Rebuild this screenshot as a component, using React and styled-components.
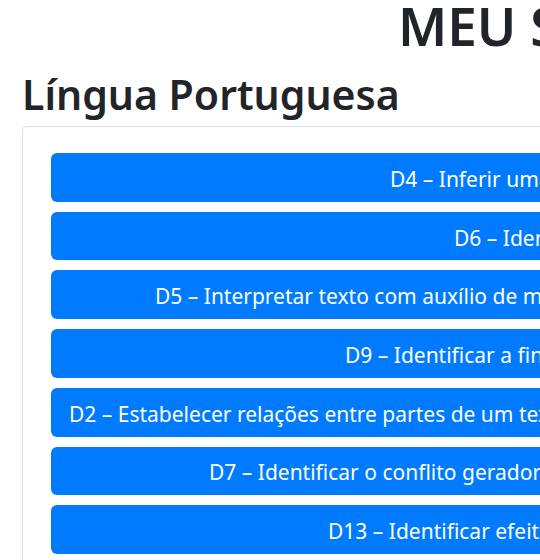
import React from "react";
import styled, { createGlobalStyle } from "styled-components";

const GlobalStyle = createGlobalStyle`
  *, *::before, *::after { box-sizing: border-box; }
  body {
    margin: 0;
    background: #fff;
    color: #212529;
    font-family: "Noto Sans", "Open Sans", sans-serif;
    overflow: hidden;
  }
`;

const Page = styled.main`
  padding-left: 22px;
  overflow: hidden;
`;

const Title = styled.h1`
  margin: 0;
  padding-left: 376px;
  font-size: 53px;
  line-height: 52px;
  font-weight: 600;
  white-space: nowrap;
`;

const SectionTitle = styled.h2`
  margin: 18px 0 8px;
  font-size: 41px;
  line-height: 48px;
  font-weight: 600;
  white-space: nowrap;
`;

const Card = styled.section`
  padding: 26px 0 26px 28px;
  border: 1px solid #dfdfdf;
  border-right: 0;
  border-top-left-radius: 5px;
`;

const SkillList = styled.div`
  display: grid;
  grid-auto-rows: 1fr;
  gap: 10px;
  min-height: 401px;
`;

const SkillButton = styled.button`
  min-width: 0;
  padding: 3px 0 0 ${({ $indent }) => $indent}px;
  border: 0;
  border-radius: 6px 0 0 6px;
  background: #007bff;
  color: #fff;
  font: inherit;
  font-size: 21px;
  line-height: 32px;
  text-align: left;
  white-space: nowrap;
  overflow: hidden;
  cursor: pointer;
`;

const skills = [
  { label: "D4 – Inferir uma", indent: 339 },
  { label: "D6 – Iden", indent: 403 },
  { label: "D5 – Interpretar texto com auxílio de m", indent: 104 },
  { label: "D9 – Identificar a fin", indent: 294 },
  { label: "D2 – Estabelecer relações entre partes de um tex", indent: 18 },
  { label: "D7 – Identificar o conflito gerador", indent: 158 },
  { label: "D13 – Identificar efeito", indent: 277 },
];

export default function App() {
  return (
    <>
      <GlobalStyle />
      <Page>
        <Title>MEU S</Title>
        <SectionTitle>Língua Portuguesa</SectionTitle>
        <Card>
          <SkillList>
            {skills.map(({ label, indent }) => (
              <SkillButton key={label} type="button" $indent={indent}>
                {label}
              </SkillButton>
            ))}
          </SkillList>
        </Card>
      </Page>
    </>
  );
}
